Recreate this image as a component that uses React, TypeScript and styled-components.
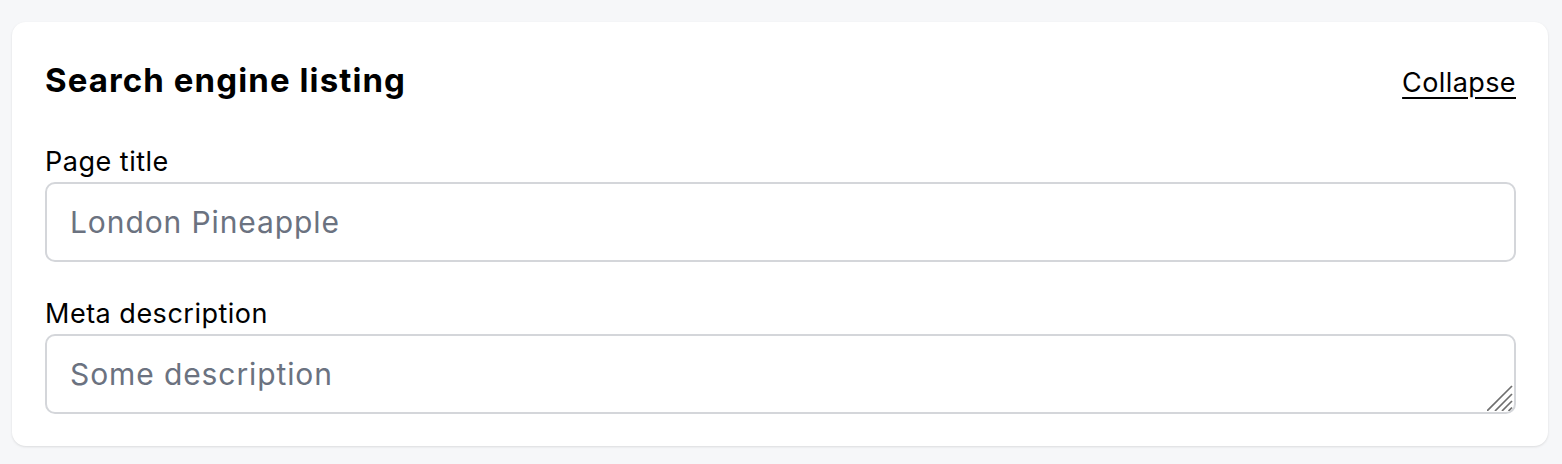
import React from "react";
import styled, { createGlobalStyle } from "styled-components";

const Global = createGlobalStyle`
  html, body { margin: 0; padding: 0; background: #f6f7f9; }
  body {
    font-family: Inter, "Noto Sans", sans-serif;
    color: #000;
  }
  * { box-sizing: border-box; }
`;

const Page = styled.div`
  padding: 22px 14px 19px 12px;
`;

const Card = styled.section`
  background: #fff;
  border-radius: 14px;
  box-shadow: 0 1px 3px rgba(0, 0, 0, 0.08), 0 1px 2px rgba(0, 0, 0, 0.04);
  padding: 40px 32px 32px 33px;
  display: flex;
  flex-direction: column;
`;

const Header = styled.div`
  display: flex;
  justify-content: space-between;
  align-items: baseline;
  margin-bottom: 43px;
`;

const Title = styled.h2`
  margin: 0;
  font-size: 33px;
  line-height: 36px;
  font-weight: 700;
  letter-spacing: 1.1px;
`;

const CollapseLink = styled.a`
  font-size: 27px;
  line-height: 36px;
  letter-spacing: 0.4px;
  color: #000;
  text-decoration: underline;
  text-underline-offset: 5px;
  text-decoration-thickness: 2px;
  cursor: pointer;
`;

const Field = styled.label<{ $last?: boolean }>`
  display: flex;
  flex-direction: column;
  gap: 2px;
  margin-bottom: ${(p) => (p.$last ? "0" : "34px")};
`;

const Label = styled.span`
  font-size: 27px;
  line-height: 36px;
  letter-spacing: 0.5px;
`;

const controlCss = `
  width: 100%;
  height: 80px;
  border: 2px solid #d4d6da;
  border-radius: 10px;
  padding: 0 23px;
  font-family: Inter, "Noto Sans", sans-serif;
  font-size: 30px;
  letter-spacing: 0.9px;
  color: #111;
  background: #fff;
  outline: none;
  &::placeholder { color: #6b7280; }
`;

const Input = styled.input`
  ${controlCss}
`;

const AreaWrap = styled.div`
  position: relative;
`;

const TextArea = styled.textarea`
  ${controlCss}
  padding-top: 19px;
  line-height: 38px;
  resize: none;
  display: block;
`;

const Grip = styled.svg`
  position: absolute;
  right: 3px;
  bottom: 3px;
  width: 26px;
  height: 26px;
  pointer-events: none;
`;

export default function App() {
  return (
    <>
      <Global />
      <Page>
        <Card>
          <Header>
            <Title>Search engine listing</Title>
            <CollapseLink>Collapse</CollapseLink>
          </Header>
          <Field>
            <Label>Page title</Label>
            <Input placeholder="London Pineapple" />
          </Field>
          <Field $last>
            <Label>Meta description</Label>
            <AreaWrap>
              <TextArea placeholder="Some description" rows={1} />
              <Grip viewBox="0 0 26 26">
                <g stroke="#6f6f6f" strokeWidth="1.7" strokeLinecap="butt">
                  <line x1="0" y1="26" x2="25" y2="1" />
                  <line x1="8" y1="26" x2="25" y2="9" />
                  <line x1="15" y1="26" x2="25" y2="16" />
                  <line x1="21.5" y1="26" x2="25" y2="22.5" />
                </g>
              </Grip>
            </AreaWrap>
          </Field>
        </Card>
      </Page>
    </>
  );
}
